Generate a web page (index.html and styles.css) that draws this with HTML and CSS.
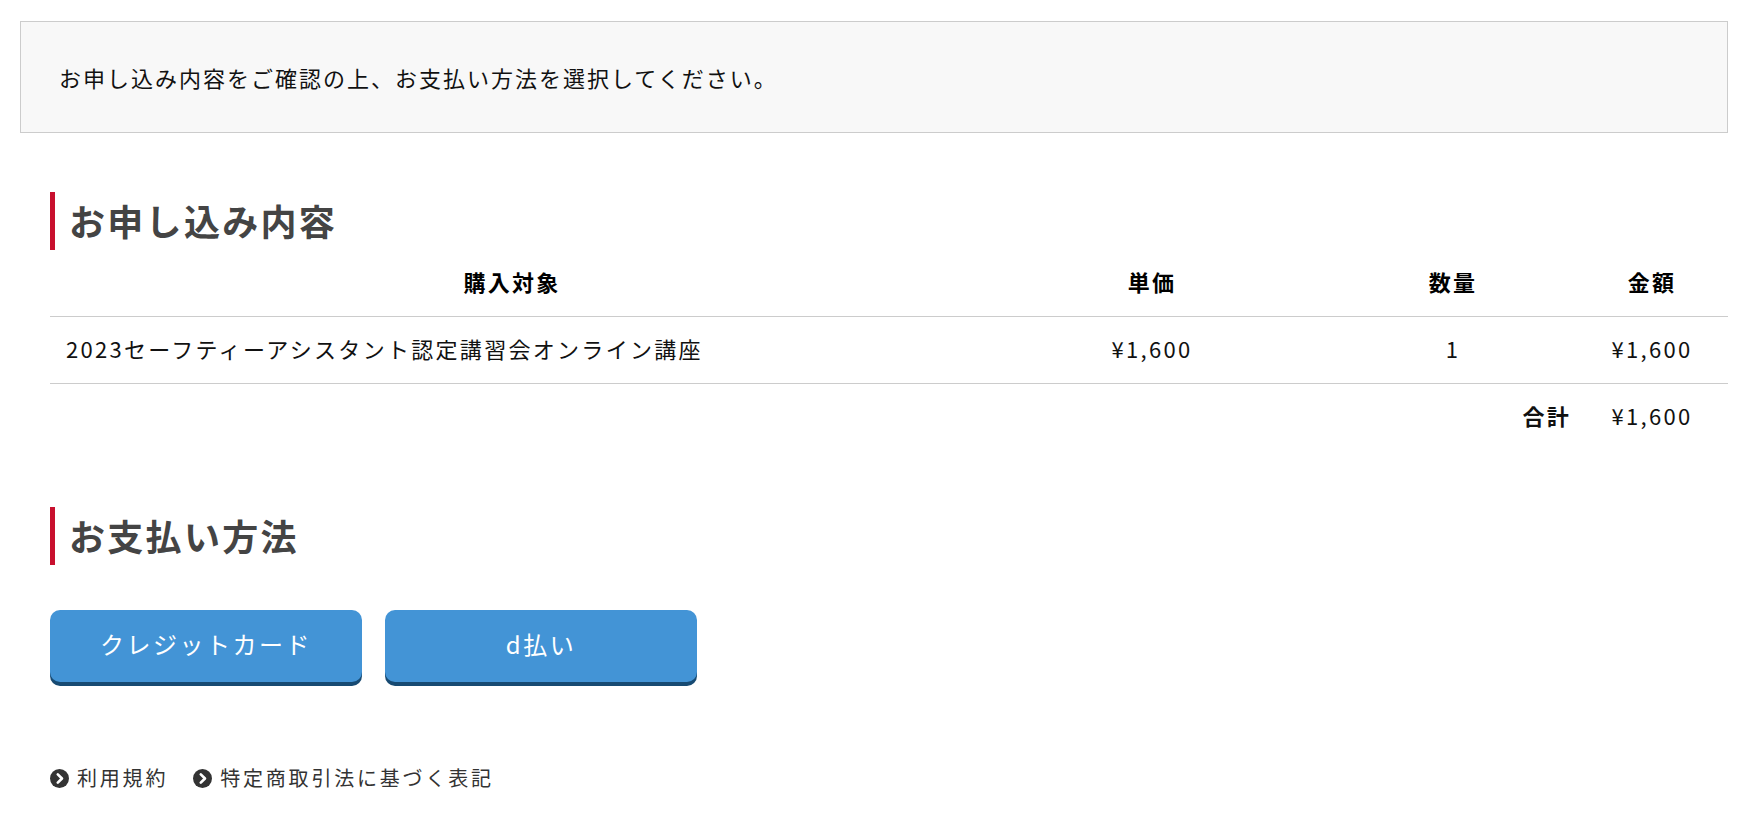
FILE: index.html
```html
<!DOCTYPE html>
<html lang="ja">
<head>
    <meta charset="UTF-8">
    <meta name="viewport" content="width=device-width, initial-scale=1.0">
    <title>お支払い方法の選択</title>
    <link rel="stylesheet" href="styles.css">
</head>
<body>
<div class="page">
    <!-- 案内 -->
    <div class="notice">お申し込み内容をご確認の上、お支払い方法を選択してください。</div>

    <div class="content">
        <!-- お申し込み内容 -->
        <h2 class="section-title">お申し込み内容</h2>
        <table class="order-table">
            <colgroup>
                <col class="col-item">
                <col class="col-price">
                <col class="col-qty">
                <col class="col-amount">
            </colgroup>
            <thead>
                <tr>
                    <th>購入対象</th>
                    <th>単価</th>
                    <th>数量</th>
                    <th>金額</th>
                </tr>
            </thead>
            <tbody>
                <tr>
                    <td class="item-name">2023セーフティーアシスタント認定講習会オンライン講座</td>
                    <td>¥1,600</td>
                    <td>1</td>
                    <td>¥1,600</td>
                </tr>
                <tr class="total-row">
                    <td colspan="3" class="total-label">合計</td>
                    <td>¥1,600</td>
                </tr>
            </tbody>
        </table>

        <!-- お支払い方法 -->
        <h2 class="section-title second">お支払い方法</h2>
        <div class="pay-buttons">
            <button type="button" class="pay-btn">クレジットカード</button>
            <button type="button" class="pay-btn">d払い</button>
        </div>

        <!-- リンク -->
        <div class="footer-links">
            <a href="#" class="footer-link">
                <svg class="arrow-icon" viewBox="0 0 20 20" width="19" height="19"><circle cx="10" cy="10" r="10" fill="#333"/><path d="M8.2 5.6l4.4 4.4-4.4 4.4" fill="none" stroke="#fff" stroke-width="2.8" stroke-linecap="round" stroke-linejoin="round"/></svg>
                利用規約
            </a>
            <a href="#" class="footer-link">
                <svg class="arrow-icon" viewBox="0 0 20 20" width="19" height="19"><circle cx="10" cy="10" r="10" fill="#333"/><path d="M8.2 5.6l4.4 4.4-4.4 4.4" fill="none" stroke="#fff" stroke-width="2.8" stroke-linecap="round" stroke-linejoin="round"/></svg>
                特定商取引法に基づく表記
            </a>
        </div>
    </div>
</div>
</body>
</html>
```

FILE: styles.css
```css
body {
    margin: 0;
    font-family: "Noto Sans CJK JP", "Noto Sans", sans-serif;
    color: #111;
    background: #fff;
}
.page {
    padding: 21px 25px 0 20px;
}
.notice {
    display: flex;
    align-items: center;
    height: 112px;
    box-sizing: border-box;
    padding: 0 38px;
    background-color: #f8f8f8;
    border: 1px solid #ccc;
    font-size: 22px;
    letter-spacing: 2px;
}
.content {
    padding-left: 30px;
}
.section-title {
    margin: 59px 0 0;
    height: 58px;
    line-height: 56px;
    border-left: 5px solid #c8102e;
    padding-left: 14px;
    font-size: 36px;
    font-weight: bold;
    letter-spacing: 2.3px;
    color: #444;
}
.section-title.second {
    margin-top: 57px;
}
.order-table {
    width: 100%;
    table-layout: fixed;
    border-collapse: collapse;
    font-size: 22px;
    letter-spacing: 2.3px;
}
.col-item { width: 924px; }
.col-price { width: 356px; }
.col-qty { width: 246px; }
.col-amount { width: 152px; }
.order-table th {
    padding: 16px 8px 20px;
    line-height: 30px;
    font-weight: bold;
    text-align: center;
    color: #000;
    border-bottom: 1px solid #ccc;
}
.order-table td {
    padding: 16px 8px 20px;
    line-height: 30px;
    text-align: center;
    border-bottom: 1px solid #ccc;
}
.order-table td.item-name {
    text-align: left;
    padding-left: 16px;
}
.total-row td {
    border-bottom: none;
}
.order-table td.total-label {
    text-align: right;
    font-weight: bold;
    padding-right: 5px;
}
.pay-buttons {
    display: flex;
    gap: 23px;
    margin-top: 45px;
}
.pay-btn {
    width: 312px;
    height: 72px;
    padding: 0 0 6px;
    border: none;
    border-radius: 10px;
    background-color: #4394d6;
    box-shadow: 0 4px 0 #174a72;
    color: #fff;
    font-family: "Noto Sans CJK JP", "Noto Sans", sans-serif;
    font-size: 24px;
    letter-spacing: 2.5px;
    cursor: pointer;
}
.footer-links {
    display: flex;
    gap: 25px;
    margin-top: 81px;
    padding-bottom: 20px;
}
.footer-link {
    display: flex;
    align-items: center;
    gap: 8px;
    color: #333;
    text-decoration: none;
    font-size: 20px;
    letter-spacing: 2.8px;
    line-height: 30px;
}
.arrow-icon {
    flex: none;
}
```
